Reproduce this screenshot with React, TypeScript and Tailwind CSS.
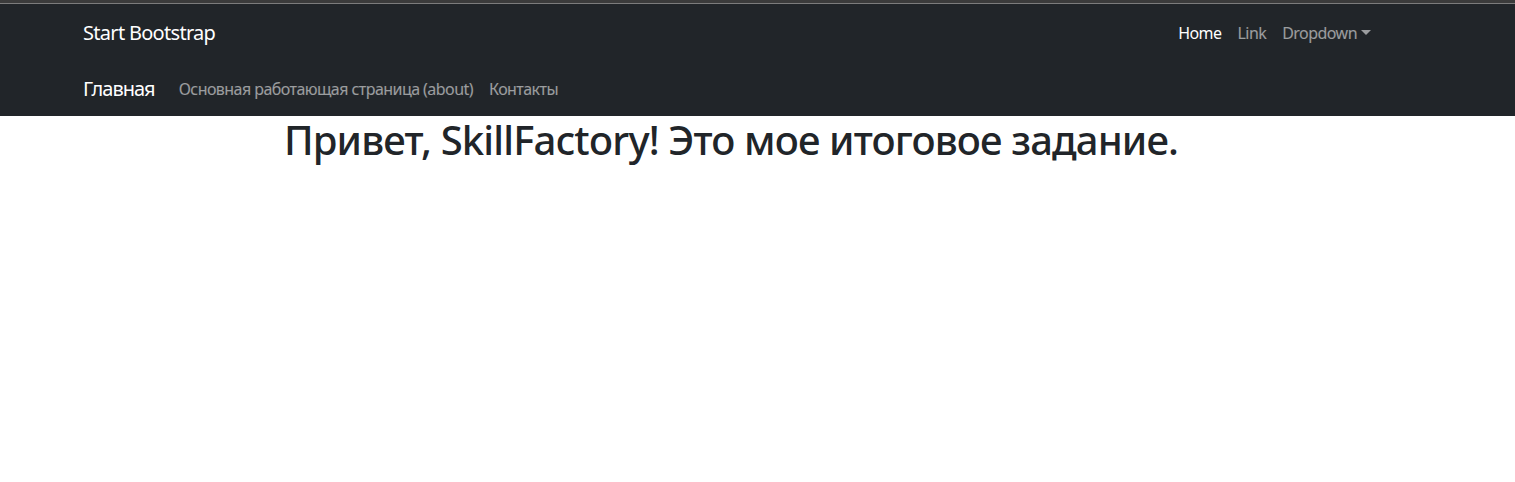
export default function App() {
  const font = { fontFamily: '"Noto Sans", "Open Sans", sans-serif' };
  return (
    <div className="min-h-[482px] bg-white" style={font}>
      <div className="h-[3px] bg-[#3b3b3b]" />
      <div className="h-px bg-[#7c7c7c]" />
      <nav className="bg-[#212529]">
        <div className="ml-[71px] w-[1320px] px-3">
          <div className="flex h-14 items-center pt-px">
            <a className="mr-4 text-[20px] leading-[30px] tracking-[-0.7px] text-white">Start Bootstrap</a>
            <ul className="ml-auto flex items-center text-[16px] leading-6 tracking-[-0.55px]">
              <li className="px-2 text-white">Home</li>
              <li className="px-2 text-white/55">Link</li>
              <li className="flex items-center px-2 text-white/55">
                Dropdown
                <span className="ml-[4px] inline-block h-0 w-0 border-x-[5px] border-t-[5px] border-x-transparent border-t-white/55" />
              </li>
            </ul>
          </div>
          <div className="flex h-14 items-center pt-px">
            <a className="mr-4 text-[20px] leading-[30px] tracking-[-1px] text-white">Главная</a>
            <ul className="flex items-center text-[16px] leading-6 tracking-[-0.55px]">
              <li className="px-2 text-white/55">Основная работающая страница (about)</li>
              <li className="px-2 text-white/55">Контакты</li>
            </ul>
          </div>
        </div>
      </nav>
      <div className="ml-[71px] w-[1320px] px-3">
        <h1 className="text-center text-[40px] font-medium leading-[48px] tracking-[-0.85px] text-[#212529]">
          Привет, SkillFactory! Это мое итоговое задание.
        </h1>
      </div>
    </div>
  );
}
